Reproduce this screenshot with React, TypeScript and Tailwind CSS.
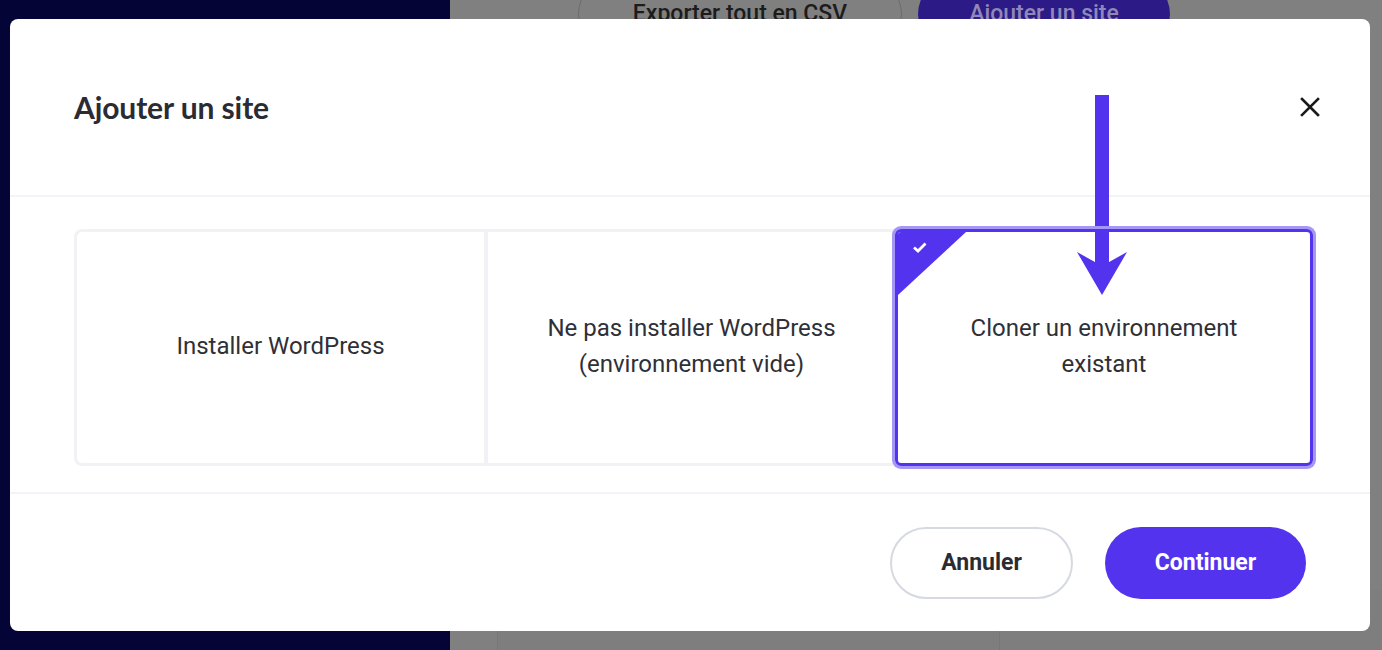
import React from 'react';

const options = [
  { id: 'install', lines: ['Installer WordPress'] },
  { id: 'empty', lines: ['Ne pas installer WordPress', '(environnement vide)'] },
  { id: 'clone', lines: ['Cloner un environnement', 'existant'] },
];

export default function App() {
  const selected = 'clone';

  return (
    <div className="relative flex h-[650px] w-full overflow-hidden font-['Roboto',sans-serif]">
      {/* Page behind the overlay */}
      <div className="w-[450px] shrink-0 bg-[#040436]" />
      <div className="flex flex-1 flex-col bg-[#808080]">
        <div className="-mt-[22px] flex gap-[16px] pl-[128px]">
          <div className="flex h-[72px] w-[324px] items-center justify-center rounded-full border border-[#6c6c6c] text-[23px] font-medium text-[#1c1c1c]">
            Exporter tout en CSV
          </div>
          <div className="flex h-[72px] w-[252px] items-center justify-center rounded-full bg-[#2c1a86] text-[23px] font-medium text-[#8f88b8]">
            Ajouter un site
          </div>
        </div>
        <div className="mt-auto flex h-[60px] pl-[47px]">
          <div className="w-[503px] border-l border-r border-[#777777] bg-[#7e7e7e]" />
          <div className="flex-1 bg-[#7e7e7e]" />
        </div>
      </div>

      {/* Modal */}
      <div className="absolute left-[10px] top-[19px] flex w-[1360px] flex-col rounded-lg bg-white">
        <div className="flex h-[176px] items-center justify-between pl-[64px] pr-[48px]">
          <h2 className="font-['Lato',sans-serif] text-[30px] font-bold tracking-[-0.1px] text-[#2b2c33]">
            Ajouter un site
          </h2>
          <button className="flex h-[24px] w-[24px] items-center justify-center">
            <svg width="20" height="20" viewBox="0 0 20 20">
              <path d="M2 2L18 18M18 2L2 18" stroke="#1a1a1a" strokeWidth="2.6" strokeLinecap="square" />
            </svg>
          </button>
        </div>
        <div className="h-[2px] bg-[#f1f4f8]" />

        <div className="pb-[26px] pl-[64px] pr-[57px] pt-[32px]">
          <div className="grid h-[237px] grid-cols-[411px_407px_1fr] rounded-lg border-[3px] border-[#f0f2f6]">
            {options.map((opt, i) => {
              const isSel = opt.id === selected;
              return (
                <div
                  key={opt.id}
                  className={
                    isSel
                      ? 'relative z-10 -my-[3px] -mr-[3px] flex items-center justify-center overflow-hidden rounded-md border-[3px] border-[#5333ed] text-center shadow-[0_0_0_3px_#a497f5]'
                      : i === 0
                        ? 'flex items-center justify-center border-r-[4px] border-[#f0f2f6] text-center'
                        : 'flex items-center justify-center text-center'
                  }
                >
                  {isSel && (
                    <svg className="absolute left-0 top-0" width="68" height="63" viewBox="0 0 68 63">
                      <polygon points="0,0 68,0 0,63" fill="#5333ed" />
                      <path d="M16 15.5L20 19L27.5 11.5" stroke="white" strokeWidth="2.8" fill="none" />
                    </svg>
                  )}
                  <p className="pb-[4px] text-[24px] leading-[36px] text-[#2f3037]">
                    {opt.lines.map((l) => (
                      <span key={l} className="block">
                        {l}
                      </span>
                    ))}
                  </p>
                </div>
              );
            })}
          </div>
        </div>

        <div className="h-[2px] bg-[#f1f4f8]" />
        <div className="flex justify-end gap-[32px] pb-[32px] pr-[64px] pt-[33px]">
          <button className="h-[72px] w-[183px] rounded-full border-2 border-[#d6d9e1] text-[23px] font-bold text-[#2b2c33]">
            Annuler
          </button>
          <button className="h-[72px] w-[201px] rounded-full bg-[#5333ed] text-[23px] font-bold text-white">
            Continuer
          </button>
        </div>
      </div>

      {/* Annotation arrow */}
      <svg className="absolute left-[1077px] top-[95px]" width="50" height="200" viewBox="0 0 50 200">
        <rect x="18" y="0" width="14" height="180" fill="#5333ed" />
        <polygon points="0,157 25,171 50,157 25,200" fill="#5333ed" />
      </svg>
    </div>
  );
}
